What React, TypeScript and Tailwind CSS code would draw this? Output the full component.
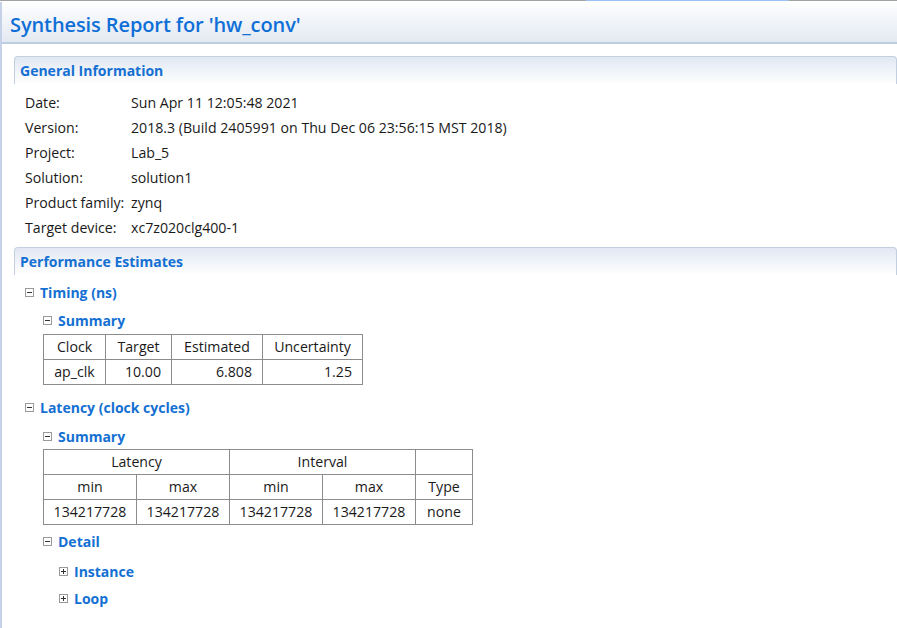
import React from "react";

const BLUE = "text-[#1470d2]";

function Toggle({ plus = false }: { plus?: boolean }) {
  return (
    <span className="relative inline-block w-[9px] h-[9px] border border-[#9a9a9a] bg-white shrink-0">
      <span className="absolute left-[1px] top-[3px] w-[5px] h-px bg-[#333]" />
      {plus && <span className="absolute left-[3px] top-[1px] w-px h-[5px] bg-[#333]" />}
    </span>
  );
}

function SectionHeader({ title }: { title: string }) {
  return (
    <div className="h-[28px] flex items-center pl-[5px] rounded-t-[4px] border-t border-x border-[#c3cfde] bg-gradient-to-b from-[#e1e8f3] to-white">
      <span className={`font-bold text-[14px] ${BLUE}`}>{title}</span>
    </div>
  );
}

function Node({ label, plus, h }: { label: string; plus?: boolean; h: string }) {
  return (
    <div className={`flex items-center gap-[6px] ${h}`}>
      <Toggle plus={plus} />
      <span className={`font-bold text-[14px] ${BLUE}`}>{label}</span>
    </div>
  );
}

const info: [string, string][] = [
  ["Date:", "Sun Apr 11 12:05:48 2021"],
  ["Version:", "2018.3 (Build 2405991 on Thu Dec 06 23:56:15 MST 2018)"],
  ["Project:", "Lab_5"],
  ["Solution:", "solution1"],
  ["Product family:", "zynq"],
  ["Target device:", "xc7z020clg400-1"],
];

const td = "border border-[#8c8c8c] h-[25px] p-0 px-[10px] font-normal";
const td2 = "border border-[#8c8c8c] h-[25px] p-0 px-[2px] font-normal";

export default function App() {
  return (
    <div
      className="w-[897px] h-[628px] bg-white overflow-hidden text-[#1a1a1a] text-[14.15px]"
      style={{ fontFamily: '"Open Sans", "Noto Sans", sans-serif' }}
    >
      <div className="flex h-px">
        <div className="w-[586px] bg-[#a3a3a3]" />
        <div className="w-[203px] bg-[#9dc1f3]" />
        <div className="flex-1 bg-[#a3a3a3]" />
      </div>
      <div className="flex h-[627px]">
        <div className="w-[2px] bg-[#c4d1e6] mt-[1px]" />
        <div className="flex-1 flex flex-col">
          <div className="h-[43px] border-b-2 border-[#bccddf] bg-gradient-to-b from-white to-[#e3e9f2] pl-[8px] pt-[11px]">
            <div className="text-[20px] leading-[26px] font-semibold text-[#0f6fd7] tracking-[-0.1px]">
              Synthesis Report for 'hw_conv'
            </div>
          </div>
          <div className="pl-[12px] pt-[12px]">
            <SectionHeader title="General Information" />
            <div className="pt-[6px] pl-[11px]">
              {info.map(([k, v]) => (
                <div key={k} className="flex items-center h-[25px]">
                  <span className="w-[106px]">{k}</span>
                  <span>{v}</span>
                </div>
              ))}
            </div>
            <div className="mt-[7px]">
              <SectionHeader title="Performance Estimates" />
            </div>
            <div className="pl-[11px] pt-[3px]">
              <Node label="Timing (ns)" h="h-[29px]" />
              <div className="pl-[18px]">
                <Node label="Summary" h="h-[27px]" />
                <table className="border-collapse">
                  <tbody>
                    <tr>
                      <td className={`${td} w-[62px] text-center`}>Clock</td>
                      <td className={`${td} w-[66px] text-center`}>Target</td>
                      <td className={`${td} w-[91px] text-center`}>Estimated</td>
                      <td className={`${td} w-[100px] text-center`}>Uncertainty</td>
                    </tr>
                    <tr>
                      <td className={`${td} text-center`}>ap_clk</td>
                      <td className={`${td} text-right`}>10.00</td>
                      <td className={`${td} text-right`}>6.808</td>
                      <td className={`${td} text-right`}>1.25</td>
                    </tr>
                  </tbody>
                </table>
              </div>
              <div className="mt-[9px]">
                <Node label="Latency (clock cycles)" h="h-[26px]" />
              </div>
              <div className="pl-[18px]">
                <div className="mt-[3px]">
                  <Node label="Summary" h="h-[26px]" />
                </div>
                <table className="border-collapse text-center table-fixed w-[429px]">
                  <colgroup>
                    <col className="w-[93px]" />
                    <col className="w-[93px]" />
                    <col className="w-[93px]" />
                    <col className="w-[93px]" />
                    <col className="w-[57px]" />
                  </colgroup>
                  <tbody>
                    <tr>
                      <td colSpan={2} className={td2}>Latency</td>
                      <td colSpan={2} className={td2}>Interval</td>
                      <td className={td2}></td>
                    </tr>
                    <tr>
                      <td className={td2}>min</td>
                      <td className={td2}>max</td>
                      <td className={td2}>min</td>
                      <td className={td2}>max</td>
                      <td className={td2}>Type</td>
                    </tr>
                    <tr>
                      <td className={td2}>134217728</td>
                      <td className={td2}>134217728</td>
                      <td className={td2}>134217728</td>
                      <td className={td2}>134217728</td>
                      <td className={td2}>none</td>
                    </tr>
                  </tbody>
                </table>
                <div className="mt-[3px]">
                  <Node label="Detail" h="h-[26px]" />
                </div>
                <div className="pl-[16px] mt-[4px]">
                  <Node label="Instance" plus h="h-[26px]" />
                  <Node label="Loop" plus h="h-[28px]" />
                </div>
              </div>
            </div>
          </div>
        </div>
      </div>
    </div>
  );
}
